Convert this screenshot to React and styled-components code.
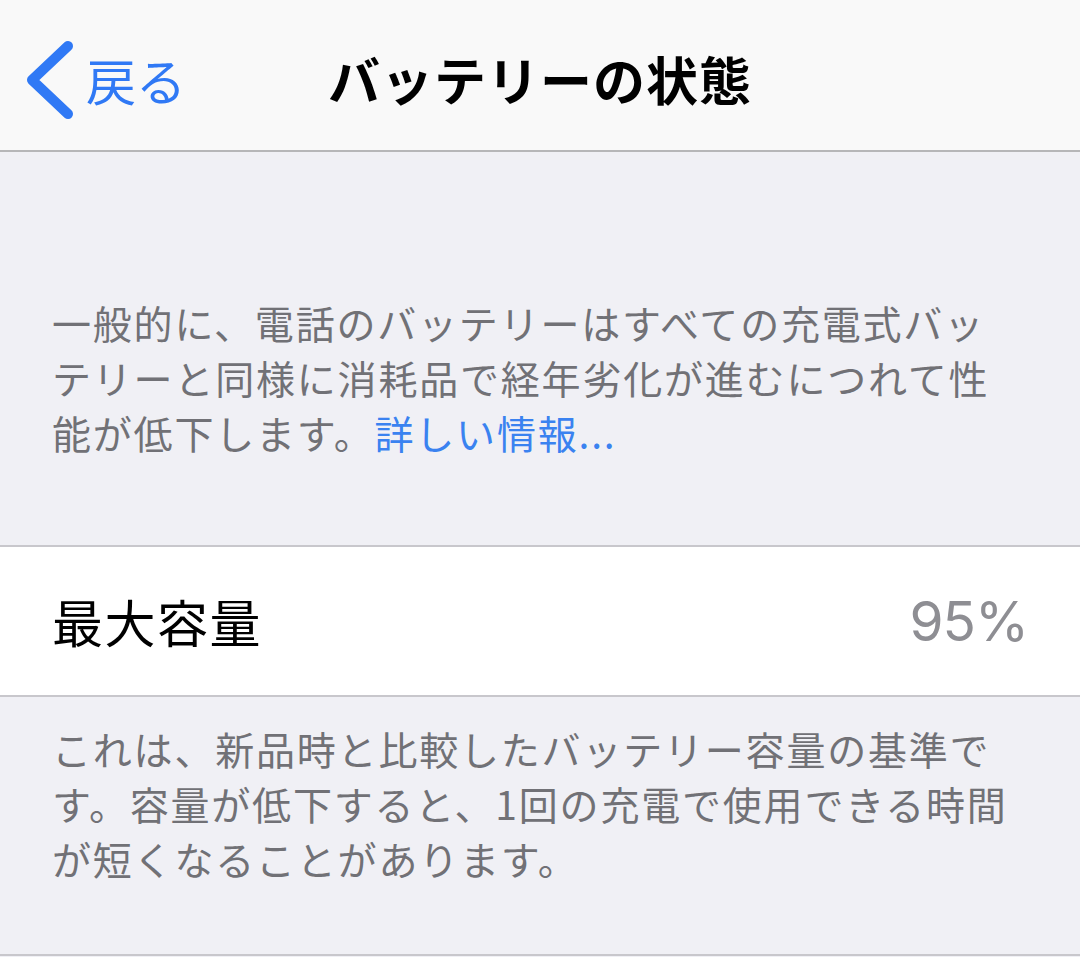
import React from "react";
import styled, { createGlobalStyle } from "styled-components";

const GlobalStyle = createGlobalStyle`
  html, body { margin: 0; padding: 0; background: #f0f0f5; }
  body { font-family: "Noto Sans CJK JP", "Noto Sans", sans-serif; -webkit-font-smoothing: antialiased; }
`;

const Page = styled.div`
  width: 1080px;
  height: 957px;
  overflow: hidden;
  display: flex;
  flex-direction: column;
  background: #f0f0f5;
`;

const NavBar = styled.header`
  height: 152px;
  box-sizing: border-box;
  padding-top: 8px;
  background: #f9f9f9;
  border-bottom: 2px solid #b6b6b8;
  display: grid;
  grid-template-columns: 1fr auto 1fr;
  align-items: center;
`;

const BackButton = styled.button`
  justify-self: start;
  display: flex;
  align-items: center;
  gap: 8px;
  margin-left: 22px;
  padding: 0;
  border: none;
  background: none;
  color: #3079f5;
  font-family: inherit;
  font-size: 50px;
  line-height: 1;
  cursor: pointer;
`;

const Title = styled.h1`
  margin: 0;
  font-size: 52px;
  font-weight: 700;
  letter-spacing: 1px;
  color: #000;
  line-height: 1;
`;

const Section = styled.section`
  padding: ${(p) => p.$pad};
  border-bottom: 2px solid #c8c7cc;
  box-sizing: border-box;
  height: ${(p) => p.$h};
`;

const Note = styled.p`
  margin: 0;
  font-size: 39px;
  line-height: 55px;
  letter-spacing: 1.8px;
  color: #717176;
  line-break: strict;
`;

const Link = styled.a`
  color: #3a82f0;
  text-decoration: none;
`;

const Cell = styled.div`
  height: 150px;
  box-sizing: border-box;
  background: #fff;
  border-bottom: 2px solid #c8c7cc;
  display: flex;
  align-items: center;
  justify-content: space-between;
  padding: 0 52px 0 52px;
`;

const CellLabel = styled.span`
  font-size: 51px;
  letter-spacing: 1.5px;
  color: #000;
`;

const CellValue = styled.span`
  font-family: Inter, "Liberation Sans", sans-serif;
  font-size: 55px;
  color: #8e8e93;
  letter-spacing: -1px;
`;

const Chevron = () => (
  <svg width="56" height="84" viewBox="0 0 56 84" fill="none">
    <path d="M46 9 L10 43 L46 77" stroke="#3079f5" strokeWidth="10" strokeLinecap="round" strokeLinejoin="round" />
  </svg>
);

export default function App() {
  return (
    <>
      <GlobalStyle />
      <Page>
        <NavBar>
          <BackButton>
            <Chevron />
            <span>戻る</span>
          </BackButton>
          <Title>バッテリーの状態</Title>
          <div />
        </NavBar>
        <Section $pad="143px 62px 0 52px" $h="395px">
          <Note>
            一般的に、電話のバッテリーはすべての充電式バッテリーと同様に消耗品で経年劣化が進むにつれて性能が低下します。
            <Link href="#">詳しい情報...</Link>
          </Note>
        </Section>
        <Cell>
          <CellLabel>最大容量</CellLabel>
          <CellValue>95%</CellValue>
        </Cell>
        <Section $pad="24px 62px 0 52px" $h="259px">
          <Note>
            これは、新品時と比較したバッテリー容量の基準です。容量が低下すると、1回の充電で使用できる時間が短くなることがあります。
          </Note>
        </Section>
      </Page>
    </>
  );
}
